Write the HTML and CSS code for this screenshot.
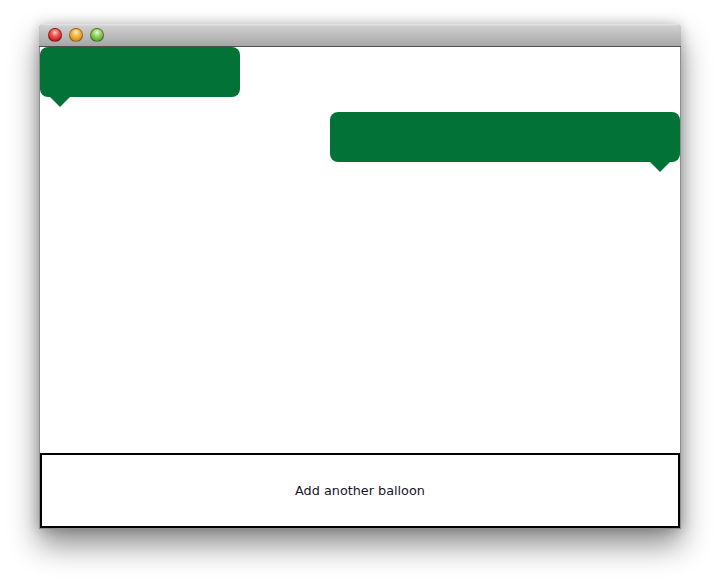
FILE: index.html
```html
<!DOCTYPE html>
<html>
<head>
<meta charset="utf-8">
<link rel="stylesheet" href="styles.css">
</head>
<body>
<div class="desktop">
  <div class="window">
    <div class="titlebar">
      <span class="light red"></span>
      <span class="light yellow"></span>
      <span class="light green"></span>
    </div>
    <div class="content">
      <div class="balloon balloon-left"></div>
      <div class="balloon balloon-right"></div>
    </div>
    <div class="panel">
      <span class="panel-label">Add another balloon</span>
    </div>
  </div>
</div>
</body>
</html>
```

FILE: styles.css
```css
html, body {
  margin: 0;
  padding: 0;
  background: #ffffff;
}

.desktop {
  height: 582px;
  box-sizing: border-box;
  padding: 24px 0 0 39px;
  overflow: hidden;
}

.window {
  width: 640px;
  border: 1px solid #8e8e8e;
  border-top: none;
  border-radius: 5px 5px 0 0;
  background: #ffffff;
  box-shadow: 0 16px 30px rgba(0, 0, 0, 0.45), 0 0 12px rgba(0, 0, 0, 0.22);
  display: flex;
  flex-direction: column;
}

.titlebar {
  height: 22px;
  border-bottom: 1px solid #4f4f4f;
  border-radius: 5px 5px 0 0;
  background: linear-gradient(to bottom, #e6e6e6 0%, #cfcfcf 10%, #b9b9b9 60%, #a6a6a6 100%);
  display: flex;
  align-items: center;
  gap: 7px;
  padding-left: 9px;
  margin: 0 -1px;
}

.light {
  width: 14px;
  height: 14px;
  border-radius: 50%;
  box-sizing: border-box;
  border: 1px solid rgba(0, 0, 0, 0.35);
}

.red {
  background: radial-gradient(circle at 50% 30%, #ffd0cc 0%, #f25a55 35%, #c7171a 80%, #a00c10 100%);
}

.yellow {
  background: radial-gradient(circle at 50% 30%, #fff2c4 0%, #f6b94a 35%, #d9861a 80%, #b56a0c 100%);
}

.green {
  background: radial-gradient(circle at 50% 30%, #e8ffd0 0%, #9ad36a 35%, #5ea332 80%, #3f7e1d 100%);
}

.content {
  height: 406px;
  display: flex;
  flex-direction: column;
}

.balloon {
  position: relative;
  height: 50px;
  background: #027236;
  border-radius: 8px;
}

.balloon::after {
  content: "";
  position: absolute;
  bottom: -7px;
  width: 14px;
  height: 14px;
  background: #027236;
  transform: rotate(45deg);
}

.balloon-left {
  width: 200px;
  align-self: flex-start;
}

.balloon-left::after {
  left: 13px;
}

.balloon-right {
  width: 350px;
  margin-top: 15px;
  align-self: flex-end;
}

.balloon-right::after {
  right: 13px;
}

.panel {
  height: 75px;
  box-sizing: border-box;
  border: 2px solid #000000;
  display: flex;
  align-items: center;
  justify-content: center;
}

.panel-label {
  font-family: "DejaVu Sans", sans-serif;
  font-size: 12.8px;
  color: #14142a;
  margin-top: -1px;
}
```
